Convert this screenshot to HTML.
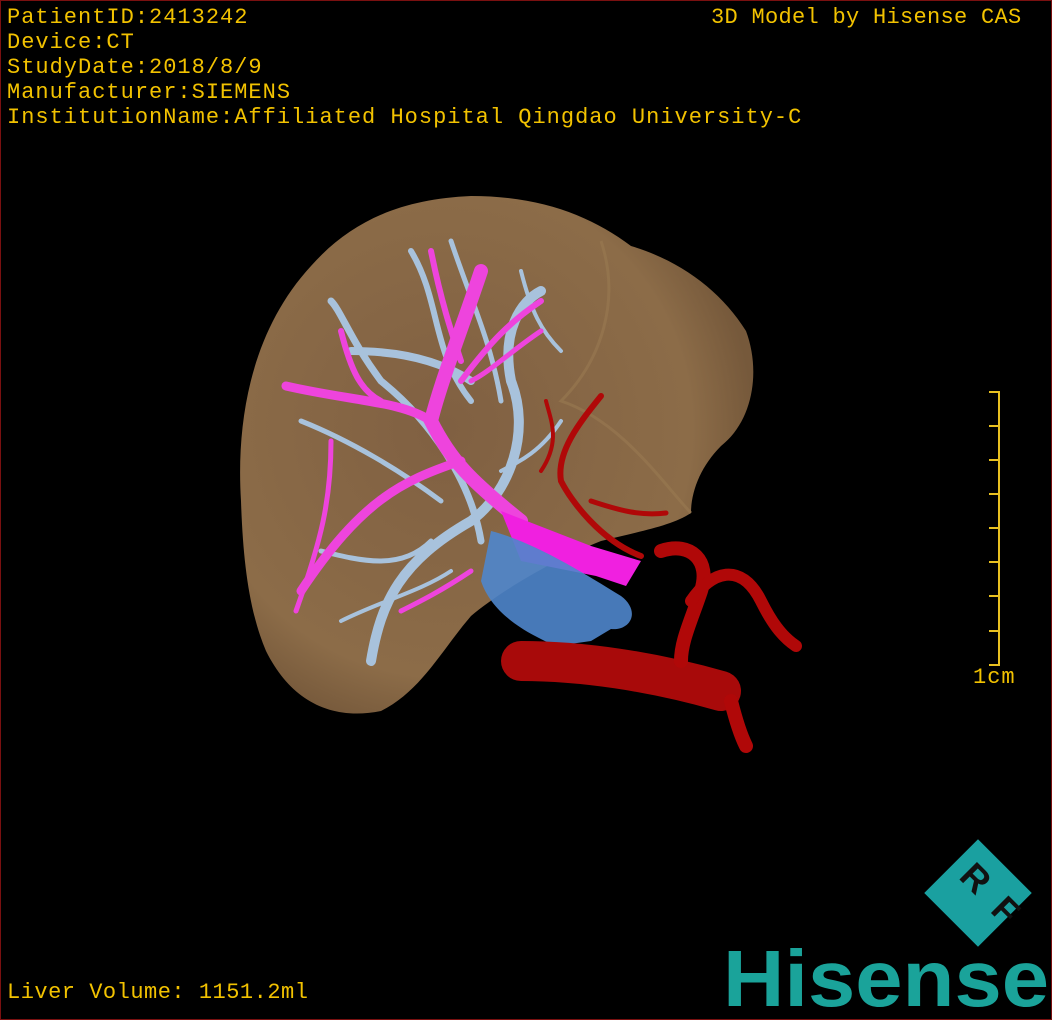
<!DOCTYPE html>
<html><head><meta charset="utf-8"><style>
html,body{margin:0;padding:0;background:#000;}
#c{position:relative;width:1052px;height:1020px;background:#000;overflow:hidden;box-sizing:border-box;border:1px solid #7a1010;}
.t{position:absolute;color:#f2c200;font-family:"Liberation Mono","DejaVu Sans Mono",monospace;font-size:22px;line-height:25px;white-space:pre;letter-spacing:1px;}
</style></head><body><div id="c">
<div class="t" style="left:6px;top:4px">PatientID:2413242
Device:CT
StudyDate:2018/8/9
Manufacturer:SIEMENS
InstitutionName:Affiliated Hospital Qingdao University-C</div>
<div class="t" style="left:710px;top:4px;letter-spacing:0.3px">3D Model by Hisense CAS</div>
<div class="t" style="left:6px;top:979px;letter-spacing:0.5px">Liver Volume: 1151.2ml</div>
<div class="t" style="left:972px;top:664px">1cm</div>
<svg width="1052" height="1020" style="position:absolute;left:0;top:0">
<defs><radialGradient id="lg" cx="0.4" cy="0.45" r="0.6"><stop offset="0" stop-color="#806042"/><stop offset="0.8" stop-color="#8c6c48"/><stop offset="1" stop-color="#76593b"/></radialGradient></defs>
<path d="M240,500 C235,420 250,330 310,265 C350,220 400,198 470,195 C540,195 590,215 630,245 C680,260 720,290 745,330 C760,370 752,420 720,445 C700,465 690,490 690,512 C670,525 640,530 600,540 C550,560 500,590 470,615 C440,650 420,690 380,710 C330,720 290,700 265,650 C248,610 242,560 240,500 Z" fill="url(#lg)"/>
<path d="M600,240 C620,300 600,360 560,400 C620,420 660,480 690,512" fill="none" stroke="#9a7a52" stroke-width="3" opacity="0.6"/>
<g fill="none" stroke="#a8c2dc" stroke-linecap="round">
<path d="M370,660 C380,600 400,560 470,520 C510,490 530,430 510,380 C500,330 520,300 540,290" stroke-width="10"/>
<path d="M480,540 C470,480 430,420 380,380 C350,340 340,310 330,300" stroke-width="7"/>
<path d="M410,250 C440,300 430,350 470,400" stroke-width="6"/>
<path d="M450,240 C470,300 490,340 500,400" stroke-width="5"/>
<path d="M300,420 C350,440 400,470 440,500" stroke-width="5"/>
<path d="M320,550 C360,560 400,570 430,540" stroke-width="5"/>
<path d="M340,620 C380,600 420,590 450,570" stroke-width="4"/>
<path d="M350,350 C400,350 440,360 470,380" stroke-width="8"/>
<path d="M520,270 C530,310 540,330 560,350" stroke-width="4"/>
<path d="M560,420 C540,450 520,460 500,470" stroke-width="4"/>
</g>
<g fill="none" stroke="#ee44dd" stroke-linecap="round">
<path d="M480,270 C460,330 440,380 430,420 C450,460 470,480 520,520" stroke-width="14"/>
<path d="M430,420 C400,400 350,400 285,385" stroke-width="9"/>
<path d="M430,250 C440,300 450,330 460,360" stroke-width="6"/>
<path d="M340,330 C350,370 360,390 380,400" stroke-width="6"/>
<path d="M460,460 C400,480 360,500 300,590" stroke-width="9"/>
<path d="M330,440 C330,500 320,540 295,610" stroke-width="5"/>
<path d="M460,380 C490,340 510,320 540,300" stroke-width="6"/>
<path d="M540,330 C510,350 490,370 470,380" stroke-width="5"/>
<path d="M470,570 C440,590 420,600 400,610" stroke-width="5"/>
</g>
<path d="M500,510 L590,545 L640,560 L625,585 L595,575 L520,560 Z" fill="#f020e0"/>
<path d="M490,530 C530,540 580,570 620,595 C640,610 630,630 610,628 L590,640 L555,645 C520,630 490,610 480,580 Z" fill="#4f86cc" opacity="0.9"/>
<g fill="none" stroke="#b00808" stroke-linecap="round">
<path d="M520,660 C580,660 650,670 720,690" stroke="#a80a0a" stroke-width="40"/>
<path d="M730,700 C735,720 740,735 745,745" stroke-width="14"/>
<path d="M660,550 C690,540 710,560 700,590 C690,620 680,640 680,660" stroke-width="14"/>
<path d="M690,600 C710,570 740,560 760,600 C770,620 780,635 795,645" stroke-width="12"/>
<path d="M640,555 C600,540 570,500 560,480 C555,450 580,420 600,395" stroke-width="6"/>
<path d="M590,500 C620,510 640,515 665,512" stroke-width="5"/>
<path d="M540,470 C560,440 550,420 545,400" stroke-width="4"/>
</g>
<g stroke="#e8c020" stroke-width="2"><line x1="998" y1="390" x2="998" y2="665"/>
<line x1="988" y1="391" x2="998" y2="391"/><line x1="988" y1="425" x2="998" y2="425"/><line x1="988" y1="459" x2="998" y2="459"/><line x1="988" y1="493" x2="998" y2="493"/><line x1="988" y1="527" x2="998" y2="527"/><line x1="988" y1="561" x2="998" y2="561"/><line x1="988" y1="595" x2="998" y2="595"/><line x1="988" y1="630" x2="998" y2="630"/><line x1="988" y1="664" x2="998" y2="664"/></g>
<g transform="translate(977,892) rotate(45)"><rect x="-38" y="-38" width="76" height="76" fill="#1aa0a0"/></g>
<text x="966" y="886" transform="rotate(45 966 886)" font-family="Liberation Sans,sans-serif" font-weight="bold" font-size="36" fill="#111" text-anchor="middle">R</text>
<text x="996" y="918" transform="rotate(45 996 918)" font-family="Liberation Sans,sans-serif" font-weight="bold" font-size="36" fill="#111" text-anchor="middle">F</text>
<text x="722" y="1005" font-family="Liberation Sans,sans-serif" font-weight="bold" font-size="80" fill="#1aa39a" textLength="326" lengthAdjust="spacingAndGlyphs">Hisense</text>
</svg>
</div></body></html>
